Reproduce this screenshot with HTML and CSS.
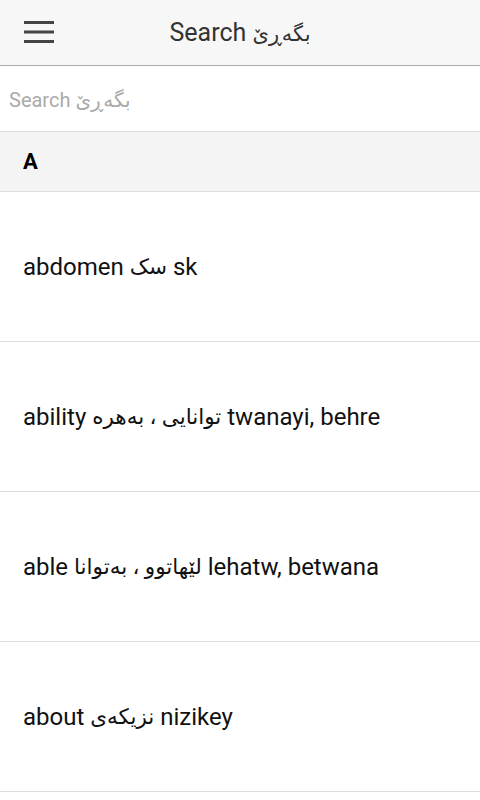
FILE: index.html
```html
<!DOCTYPE html>
<html lang="ckb">
<head>
<meta charset="utf-8">
<title>Search</title>
<link rel="stylesheet" href="styles.css">
</head>
<body>
<header class="topbar">
  <button class="menu-btn" aria-label="Menu">
    <svg width="30" height="22" viewBox="0 0 30 22"><rect x="0" y="0" width="30" height="3" fill="#444"/><rect x="0" y="9.5" width="30" height="3" fill="#444"/><rect x="0" y="19" width="30" height="3" fill="#444"/></svg>
  </button>
  <h1 class="title">Search <span class="ku">بگەڕێ</span></h1>
</header>
<div class="search">
  <input class="search-input" type="text" placeholder="Search بگەڕێ" dir="ltr">
</div>
<div class="section">A</div>
<ul class="list">
  <li class="item">abdomen <span class="ku">سک</span> sk</li>
  <li class="item">ability <span class="ku">توانایی ، بەهرە</span> twanayi, behre</li>
  <li class="item">able <span class="ku">لێهاتوو ، بەتوانا</span> lehatw, betwana</li>
  <li class="item">about <span class="ku">نزیکەی</span> nizikey</li>
</ul>
</body>
</html>
```
FILE: styles.css
```css
* { box-sizing: border-box; }
html, body { margin: 0; padding: 0; }
body {
  width: 480px;
  background: #fff;
  font-family: Roboto, "Noto Sans", "DejaVu Sans", sans-serif;
  color: #111;
  overflow: hidden;
}
.topbar {
  height: 66px;
  background: #f7f7f7;
  border-bottom: 1px solid #aaaaaa;
  display: flex;
  align-items: center;
}
.menu-btn {
  border: 0;
  background: none;
  padding: 0;
  margin-left: 24px;
  width: 30px;
  height: 22px;
  display: flex;
  align-items: flex-start;
  margin-top: -1px;
}
.title {
  flex: 1;
  margin: 0;
  margin-right: 54px;
  text-align: center;
  font-weight: 400;
  font-size: 25px;
  color: #333;
}
.title .ku { font-size: 21px; }
.search {
  height: 66px;
  border-bottom: 1px solid #dddddd;
  display: flex;
  align-items: center;
}
.search-input {
  width: 100%;
  border: 0;
  outline: none;
  background: transparent;
  padding: 0 9px;
  font-family: Roboto, "Noto Sans", "DejaVu Sans", sans-serif;
  font-size: 20px;
  color: #333;
  margin-top: 2px;
}
.search-input::placeholder { color: #aaaaaa; }
.section {
  height: 60px;
  background: #f4f4f4;
  border-bottom: 1px solid #dddddd;
  display: flex;
  align-items: center;
  padding-left: 23px;
  font-weight: 700;
  font-size: 22px;
  color: #000;
}
.list { list-style: none; margin: 0; padding: 0; }
.item {
  height: 150px;
  border-bottom: 1px solid #dddddd;
  display: flex;
  align-items: center;
  padding-left: 23px;
  font-size: 24px;
  color: #111;
  white-space: pre;
}
.item .ku { font-size: 21.5px; }
```
